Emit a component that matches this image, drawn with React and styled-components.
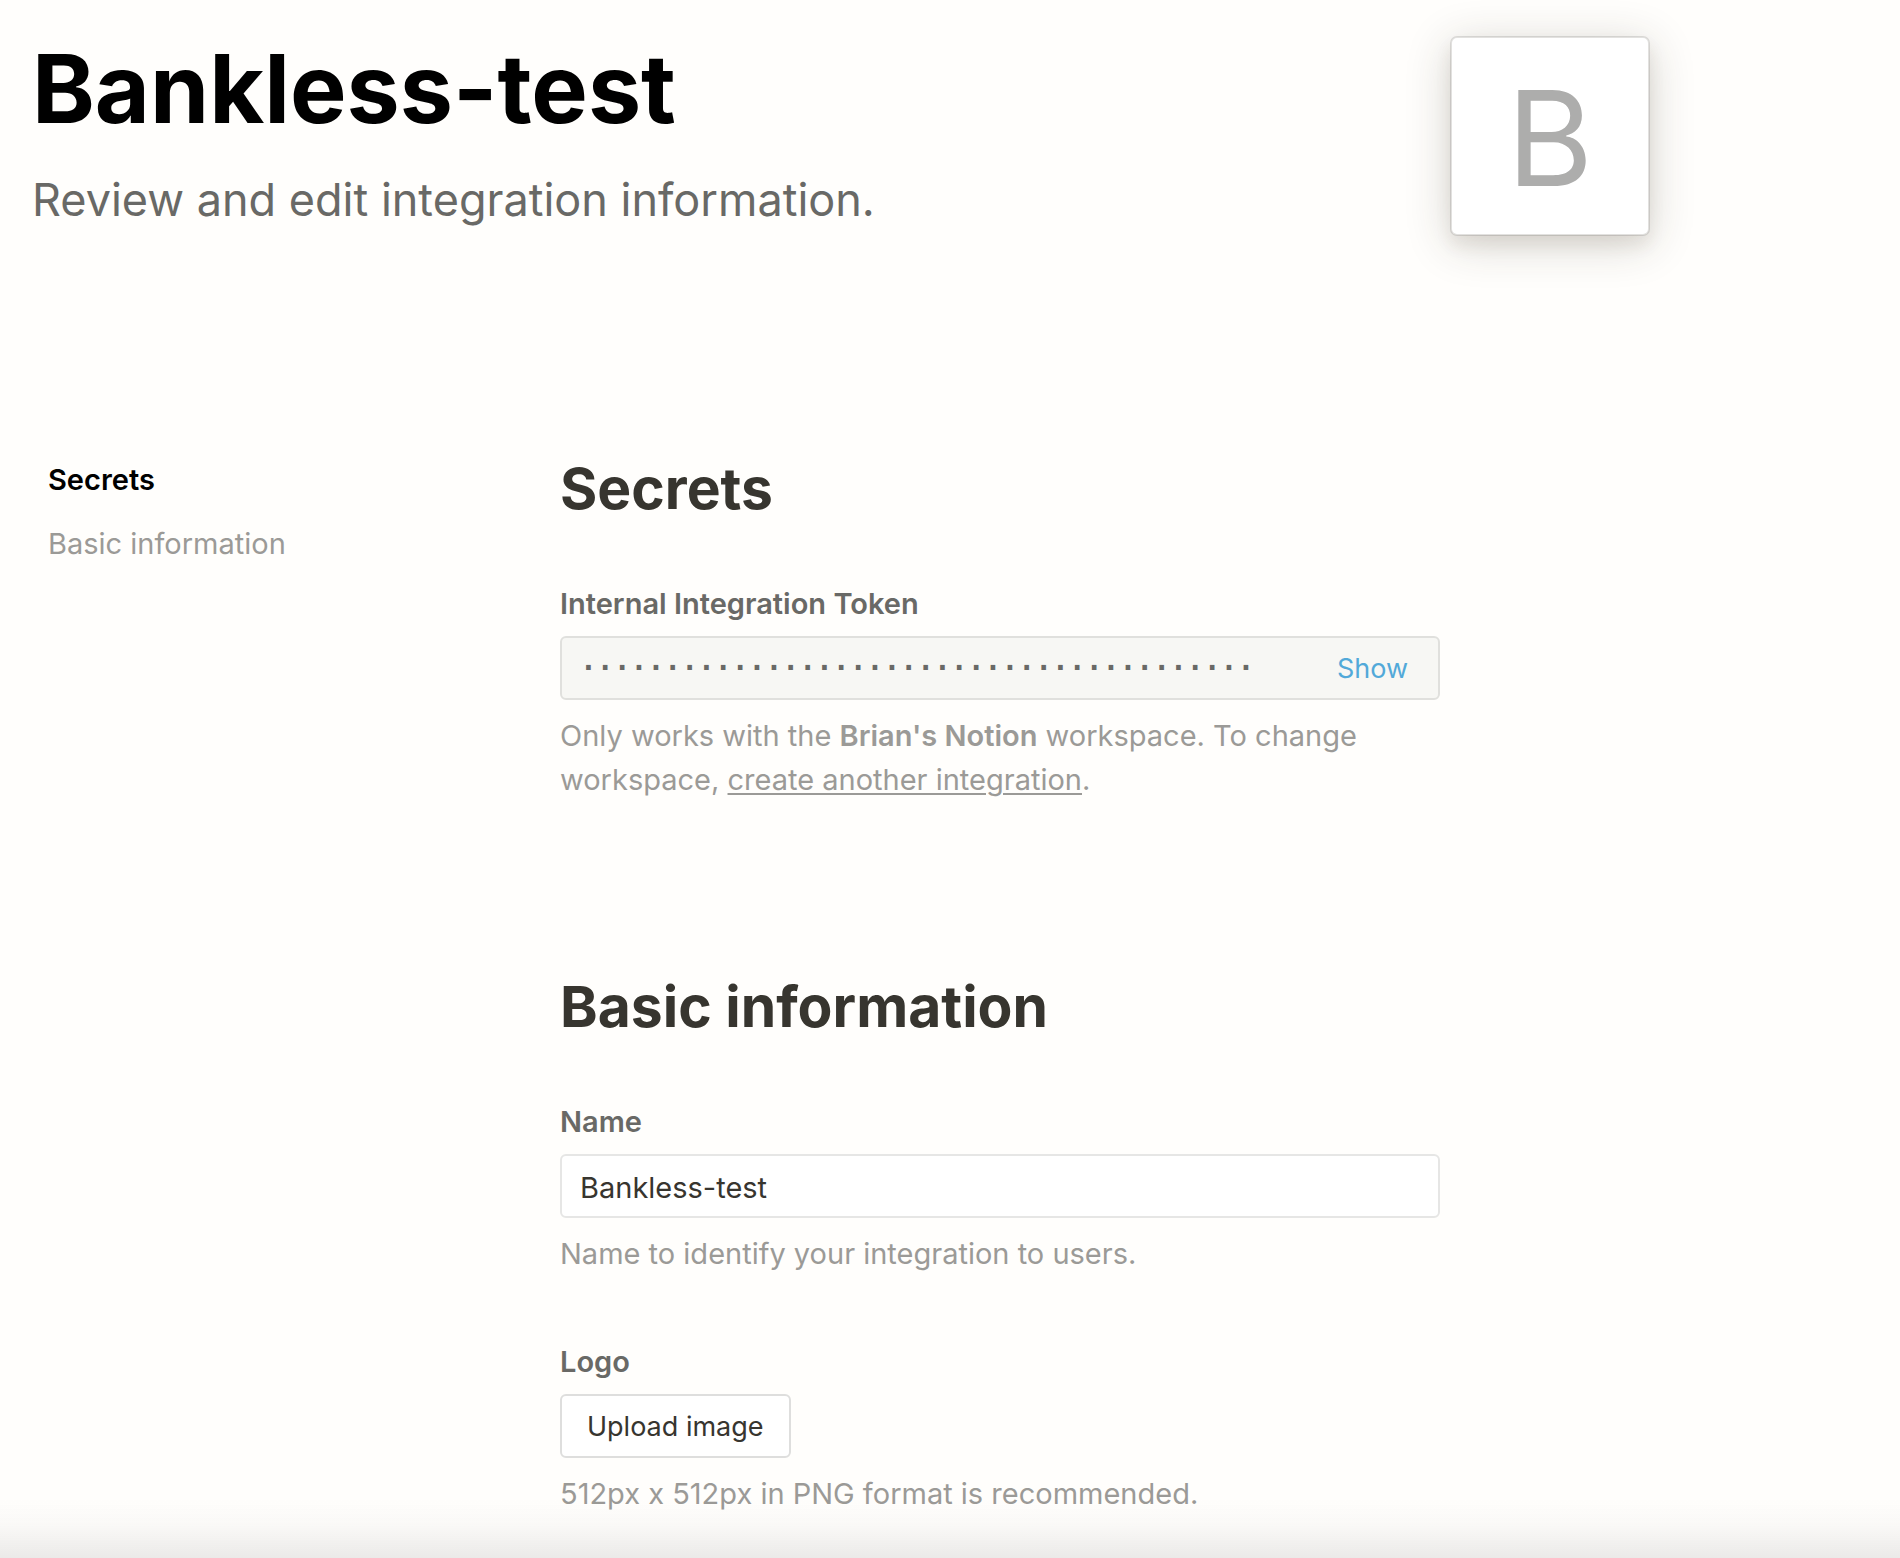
import React, { useState } from "react";
import styled, { createGlobalStyle } from "styled-components";

const GlobalStyle = createGlobalStyle`
  *, *::before, *::after { box-sizing: border-box; }
  body {
    margin: 0;
    background: #fffefc;
    color: #37352f;
    font-family: Inter, "Liberation Sans", sans-serif;
    font-size: 29px;
    line-height: 44px;
  }
  h1, h2, p { margin: 0; }
`;

const Page = styled.div`
  max-width: 1682px;
  padding: 36px 32px 42px;
`;

const Header = styled.header`
  display: flex;
  justify-content: space-between;
  align-items: flex-start;
  gap: 32px;
  margin-bottom: 217px;
`;

const Title = styled.h1`
  color: #000;
  font-size: 95px;
  font-weight: 700;
  line-height: 106px;
`;

const Subtitle = styled.p`
  margin-top: 30px;
  color: #696966;
  font-size: 45px;
  line-height: 56px;
`;

const LogoTile = styled.div`
  display: flex;
  flex: none;
  align-items: center;
  justify-content: center;
  width: 200px;
  height: 200px;
  padding-top: 4px;
  border-radius: 7px;
  border: 2px solid rgba(15, 15, 15, 0.12);
  background: #fff;
  background-clip: padding-box;
  box-shadow: 0 10px 16px rgba(84, 70, 35, 0.08), 0 8px 46px rgba(50, 46, 30, 0.2);
  color: #adadac;
  font-size: 132px;
  line-height: 160px;
`;

const Columns = styled.div`
  display: grid;
  grid-template-columns: 496px minmax(0, 880px);
  column-gap: 32px;
  align-items: start;
`;

const Nav = styled.nav`
  display: flex;
  flex-direction: column;
  align-items: flex-start;
  gap: 20px;
  padding: 5px 16px;
`;

const NavLink = styled.a`
  color: ${({ $active }) => ($active ? "#000" : "#9b9a97")};
  font-weight: ${({ $active }) => ($active ? 600 : 400)};
  text-decoration: none;
`;

const Main = styled.main`
  display: flex;
  flex-direction: column;
  gap: 169px;
`;

const Section = styled.section`
  display: flex;
  flex-direction: column;
`;

const SectionTitle = styled.h2`
  margin-bottom: 57px;
  font-size: 57px;
  font-weight: 700;
  line-height: 72px;
`;

const Fields = styled.div`
  display: flex;
  flex-direction: column;
  gap: 64px;
`;

const Field = styled.div`
  display: flex;
  flex-direction: column;
  align-items: flex-start;
`;

const Label = styled.label`
  margin-bottom: 10px;
  color: #696966;
  font-weight: 600;
`;

const Help = styled.p`
  margin-top: 14px;
  color: #9b9a97;

  strong { font-weight: 600; }
`;

const HelpLink = styled.a`
  color: inherit;
  text-decoration: underline;
  text-decoration-thickness: 2px;
  text-underline-offset: 3px;
`;

const TokenBox = styled.div`
  display: flex;
  align-items: center;
  width: 100%;
  height: 64px;
  border: 2px solid #e0e0dd;
  border-radius: 6px;
  background: #f7f7f4;
`;

const TokenInput = styled.input`
  flex: 1;
  min-width: 0;
  padding: 0 18px;
  border: 0;
  outline: 0;
  background: transparent;
  color: #696966;
  font: 700 28px/44px "DejaVu Sans Mono", monospace;
`;

const ShowButton = styled.button`
  padding: 2px 30px 0;
  border: 0;
  background: transparent;
  color: #52a9d9;
  font: inherit;
  font-size: 27px;
  cursor: pointer;
`;

const TextInput = styled.input`
  width: 100%;
  height: 64px;
  padding: 2px 18px 0;
  border: 2px solid #e6e6e5;
  border-radius: 6px;
  outline: 0;
  background: #fff;
  color: #37352f;
  font: inherit;
`;

const UploadButton = styled.button`
  height: 64px;
  padding: 2px 25px 0;
  border: 2px solid #dededd;
  border-radius: 6px;
  background: #fff;
  color: #37352f;
  font: inherit;
  font-size: 27px;
  cursor: pointer;
`;

const BottomFade = styled.div`
  position: fixed;
  right: 0;
  bottom: 0;
  left: 0;
  height: 60px;
  background: linear-gradient(to bottom, rgba(35, 33, 38, 0), rgba(35, 33, 38, 0.025) 45%, rgba(35, 33, 38, 0.09));
  pointer-events: none;
`;

const MASK = "·".repeat(40);

export default function App() {
  const [name, setName] = useState("Bankless-test");

  return (
    <>
      <GlobalStyle />
      <Page>
        <Header>
          <div>
            <Title>Bankless-test</Title>
            <Subtitle>Review and edit integration information.</Subtitle>
          </div>
          <LogoTile>B</LogoTile>
        </Header>
        <Columns>
          <Nav>
            <NavLink href="#secrets" $active>Secrets</NavLink>
            <NavLink href="#basic">Basic information</NavLink>
          </Nav>
          <Main>
            <Section id="secrets">
              <SectionTitle>Secrets</SectionTitle>
              <Field>
                <Label htmlFor="token">Internal Integration Token</Label>
                <TokenBox>
                  <TokenInput id="token" readOnly value={MASK} />
                  <ShowButton type="button">Show</ShowButton>
                </TokenBox>
                <Help>
                  Only works with the <strong>Brian's Notion</strong> workspace. To change
                  workspace, <HelpLink href="#create">create another integration</HelpLink>.
                </Help>
              </Field>
            </Section>
            <Section id="basic">
              <SectionTitle>Basic information</SectionTitle>
              <Fields>
                <Field>
                  <Label htmlFor="name">Name</Label>
                  <TextInput id="name" value={name} onChange={(e) => setName(e.target.value)} />
                  <Help>Name to identify your integration to users.</Help>
                </Field>
                <Field>
                  <Label htmlFor="logo">Logo</Label>
                  <UploadButton id="logo" type="button">Upload image</UploadButton>
                  <Help>512px x 512px in PNG format is recommended.</Help>
                </Field>
              </Fields>
            </Section>
          </Main>
        </Columns>
      </Page>
      <BottomFade />
    </>
  );
}
